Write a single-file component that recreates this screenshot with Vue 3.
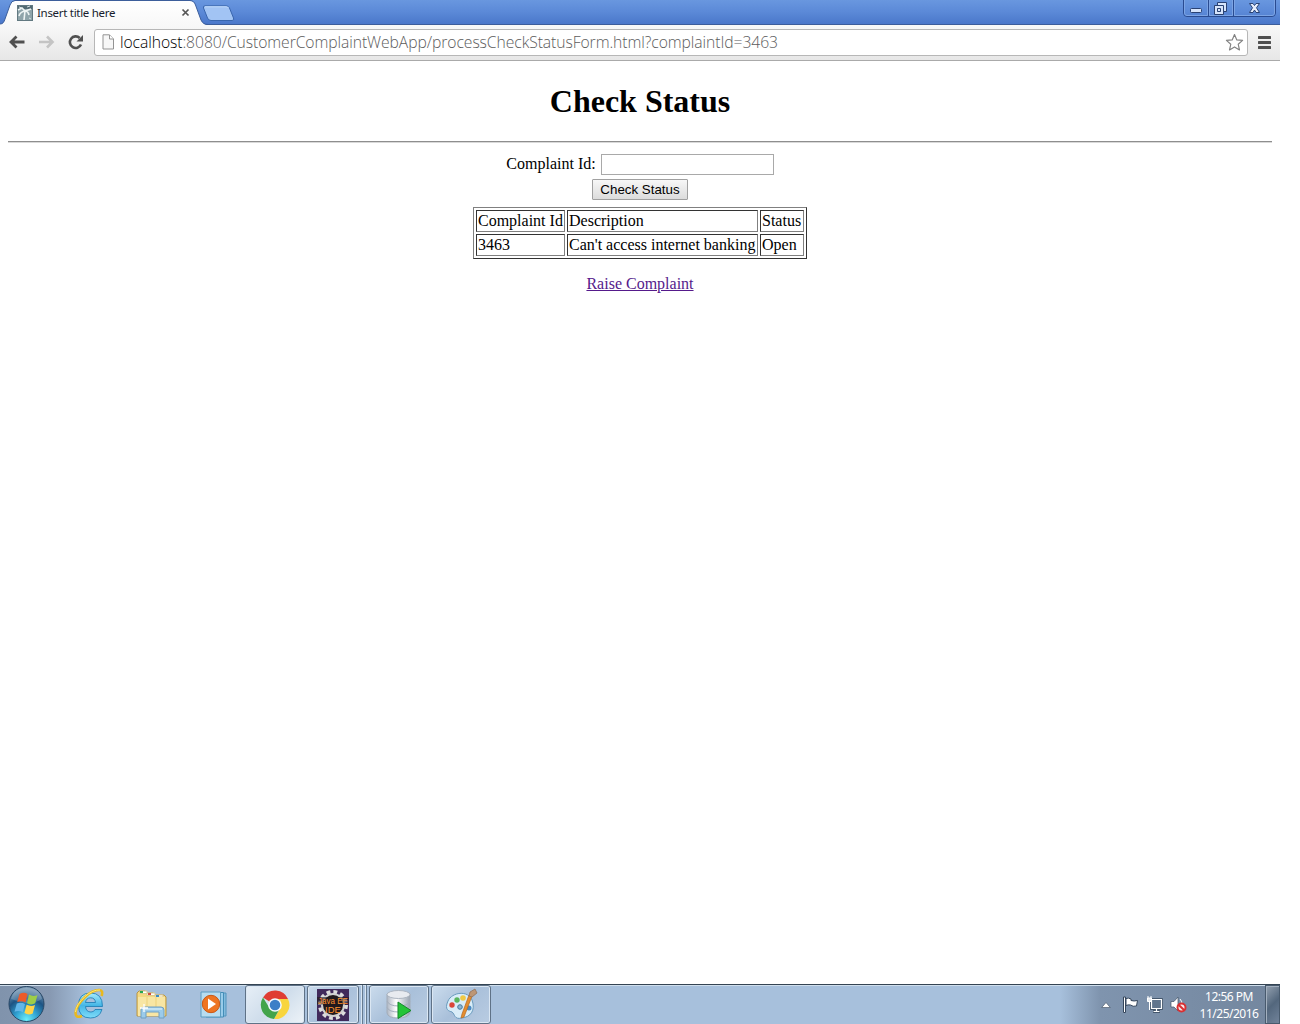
<script setup>
import { ref } from 'vue'

const complaintId = ref('')
const headers = ['Complaint Id', 'Description', 'Status']
const complaints = [['3463', "Can't access internet banking", 'Open']]
</script>

<template>
  <div class="screen">
    <header class="titlebar">
      <div class="tab">
        <svg class="tab-shape" width="212" height="25" viewBox="0 0 212 25">
          <defs>
            <linearGradient id="tabFill" x1="0" y1="0" x2="0" y2="1">
              <stop offset="0" stop-color="#fff" />
              <stop offset="1" stop-color="#f8f8f8" />
            </linearGradient>
          </defs>
          <path d="M0 25V24C3 24 4 22 5 19L10 5Q11.500 1 15 1H190Q194 1 195.500 5L201 20Q203 24.500 207 25Z" fill="url(#tabFill)" />
          <path d="M0 24C3 24 4 22 5 19L10 5Q11.500 .5 15 .5H190Q194 .5 195.500 5L201 20Q203 24.500 208 24.500H212" fill="none" stroke="#3c5e9b" />
        </svg>
        <div class="tab-content">
          <svg class="favicon" width="17" height="16" viewBox="0 0 17 16">
            <rect x=".5" y=".5" width="15" height="15" fill="#8fa4aa" stroke="#627981" />
            <path d="M1 1H15V4H1Z" fill="#526a73" />
            <path d="M1 5L5 3L8 6L14 4M2 11Q3 7 8 6Q11 6 12 10M8 6L7 15" fill="none" stroke="#eef4f4" stroke-width="1.600" />
            <path d="M2 2L5 3M10 2L13 1M12 13L14 14" stroke="#d6e2e4" />
          </svg>
          <span class="tab-title">Insert title here</span>
          <svg class="tab-close" width="9" height="9" viewBox="0 0 9 9"><path d="M1.500 1.500L7.500 7.500M7.500 1.500L1.500 7.500" stroke="#555" stroke-width="1.700" /></svg>
        </div>
      </div>
      <svg class="new-tab" width="34" height="17" viewBox="0 0 34 17">
        <path d="M3 .8H24Q26.500 .8 27.500 3L31.500 13Q32.500 15.500 30 15.500H9Q6.500 15.500 5.500 13L1.500 3Q.8 .8 3 .8Z" fill="#a2c4f4" stroke="#3865ad" />
        <path d="M3 1.800H24Q26 1.800 26.500 3" fill="none" stroke="#c4dcfb" />
      </svg>
      <svg class="window-buttons" width="94" height="18" viewBox="0 0 94 18">
        <path d="M.5 0V13Q.5 16.500 4 16.500H89Q92.500 16.500 92.500 13V0M25.500 0V16M50.500 0V16" fill="none" stroke="#294b91" />
        <path d="M1.500 0V13Q1.500 15.500 4 15.500H24.500V0M26.500 0V15.500H49.500V0M51.500 0V15.500H89Q91.500 15.500 91.500 13V0" fill="none" stroke="#7ca4e4" />
        <rect x="7.500" y="8.500" width="11" height="4" rx="1" fill="#d6e4fb" stroke="#2a4273" />
        <path d="M34.500 2.500H43.500V11.500H34.500Z" fill="#d6e4fb" stroke="#2a4273" />
        <path d="M31.500 5.500H40.500V14.500H31.500ZM34.500 8.500H37.500V11.500H34.500Z" fill="#d6e4fb" stroke="#2a4273" fill-rule="evenodd" />
        <path d="M66.500 3.500H70L71.500 5.500L73 3.500H76.500L73.500 7.800L76.500 12.500H73L71.500 10L70 12.500H66.500L69.500 7.800Z" fill="#e5edfd" stroke="#2a4273" />
      </svg>
    </header>

    <nav class="toolbar">
      <svg class="nav-icon back" width="18" height="16" viewBox="0 0 18 16"><path d="M17.500 8H4.500M9.500 2.500L4 8L9.500 13.500" fill="none" stroke="#505050" stroke-width="2.800" /></svg>
      <svg class="nav-icon forward" width="18" height="16" viewBox="0 0 18 16"><path d="M1 8H14M9 2.500L14.500 8L9 13.500" fill="none" stroke="#c4c4c4" stroke-width="2.600" /></svg>
      <svg class="nav-icon reload" width="18" height="16" viewBox="0 0 18 16"><path d="M13 10.500A5.800 5.800 0 1 1 11.700 4" fill="none" stroke="#505050" stroke-width="2.600" /><path d="M15 1V7.500H8.500Z" fill="#505050" /></svg>
      <div class="address">
        <svg class="page-icon" width="13" height="16" viewBox="0 0 13 16"><path d="M1 .8H7.500L11.500 5V15H1Z" fill="#f7f7f7" stroke="#939393" /><path d="M7.500 1V5H11.500" fill="#fff" stroke="#939393" /></svg>
        <span class="url"><b>localhost</b>:8080/CustomerComplaintWebApp/processCheckStatusForm.html?complaintId=3463</span>
        <svg class="star" width="19" height="19" viewBox="0 0 19 19"><path d="M9.500 1.500L11.800 6.900L17.600 7.400L13.200 11.200L14.500 17L9.500 13.900L4.500 17L5.800 11.200L1.400 7.400L7.200 6.900Z" fill="#fff" stroke="#828282" stroke-width="1.150" stroke-linejoin="round" /></svg>
      </div>
      <svg class="menu" width="13" height="13" viewBox="0 0 13 13"><path d="M1 1.500H12M1 6.500H12M1 11.500H12" stroke="#505050" stroke-width="2.900" stroke-linecap="round" /></svg>
    </nav>

    <main class="page">
      <h1>Check Status</h1>
      <hr />
      <form @submit.prevent>
        <label>Complaint Id: <input v-model="complaintId" type="text" /></label>
        <button type="submit">Check Status</button>
      </form>
      <table>
        <colgroup><col class="col-id" /><col class="col-description" /><col /></colgroup>
        <tbody>
          <tr><td v-for="h in headers" :key="h">{{ h }}</td></tr>
          <tr v-for="row in complaints" :key="row[0]"><td v-for="cell in row" :key="cell">{{ cell }}</td></tr>
        </tbody>
      </table>
      <a href="#">Raise Complaint</a>
    </main>

    <footer class="taskbar">
      <div class="start">
        <svg width="40" height="38" viewBox="0 0 40 38">
          <defs>
            <radialGradient id="orb" cx=".5" cy=".95" r=".95">
              <stop offset="0" stop-color="#6cf0fb" /><stop offset=".35" stop-color="#2f9fd0" /><stop offset=".65" stop-color="#1d5484" /><stop offset="1" stop-color="#87a3bb" />
            </radialGradient>
          </defs>
          <circle cx="19.500" cy="19" r="17.500" fill="url(#orb)" stroke="#294765" />
          <path d="M4 14Q7 3 19.500 3T35 14Q27 19 19.500 18T4 14Z" fill="#fff" opacity=".2" />
          <path d="M12.500 9Q17 6.500 20.500 9L18.500 17.500Q14.500 15.300 10.200 17Z" fill="#ed5b29" />
          <path d="M22 9.500Q26 12 30.500 10L28.200 18.300Q24.500 20.500 20 18.200Z" fill="#9dcd48" />
          <path d="M9.800 18.500Q14.200 16.700 18 19L15.800 27.200Q12 25 7.500 26.700Z" fill="#62b6e9" />
          <path d="M19.600 19.800Q24 22 28 20L25.700 28.500Q21.500 30.500 17.400 28Z" fill="#ffd448" />
        </svg>
      </div>
      <div class="pinned">
        <svg width="34" height="34" viewBox="0 0 34 34">
          <defs><linearGradient id="ie" x1="0" y1="0" x2="0" y2="1"><stop stop-color="#a8ecfd" /><stop offset=".5" stop-color="#45b6e6" /><stop offset="1" stop-color="#7edcf8" /></linearGradient></defs>
          <path d="M29.500 18.500H12.500Q13 24 18 24Q21 24 22 21.500H29Q26.500 30 17.500 30Q5.500 30 5.500 17.500Q5.500 5 17.500 5Q29.500 5 29.500 18.500ZM12.500 14.500H22.500Q22 9.800 17.600 9.800Q13.200 9.800 12.500 14.500Z" fill="url(#ie)" stroke="#1878b1" stroke-width=".8" fill-rule="evenodd" />
          <path d="M28.500 8Q30.500 2.500 26.500 2Q20 1.500 12 9Q3 17.500 2.500 25Q2.500 30.500 9 28" fill="none" stroke="#e9b91f" stroke-width="2.600" />
          <path d="M27 2Q20 1.500 12 8.500Q3 17 2.500 24" fill="none" stroke="#ffee84" stroke-width=".9" />
        </svg>
      </div>
      <div class="pinned">
        <svg width="34" height="32" viewBox="0 0 34 32">
          <path d="M2 27V4L4 2H10L12 4H18L20 6H29L31 8V27Z" fill="#f4d980" stroke="#b89544" />
          <path d="M5 2H12V4.500H5ZM12 4H20V6.500H12ZM20 6H28V8H20Z" fill="#fff" stroke="#dcc98f" />
          <path d="M5 2H8V4H5Z" fill="#21a850" /><path d="M13 4H16V6H13Z" fill="#d64c3c" /><path d="M21 6H24V8H21Z" fill="#3a8cc8" />
          <path d="M3 8H30V27H3Z" fill="#f8e6a4" /><path d="M12 8V18M21 8V18" stroke="#ecd17b" />
          <path d="M6 29V21Q6 18 9 18H26Q29 18 29 21V29H24V23H11V29Z" fill="#9bcbea" stroke="#6f9fc4" />
          <path d="M8 20H27" stroke="#e8f8ff" /><path d="M9 15V23M5 19H13" stroke="#fff" stroke-width="1.300" />
        </svg>
      </div>
      <div class="pinned">
        <svg width="32" height="28" viewBox="0 0 32 28">
          <path d="M12 2H28V25H12Z" fill="#83bbdd" stroke="#5294bd" /><path d="M8 1.500H25.500V26H8Z" fill="#99ccea" stroke="#448db7" /><path d="M3 1H22.500V26H3Z" fill="#b8ddf0" stroke="#5b9cc1" />
          <circle cx="13" cy="13" r="8.700" fill="#ee7522" stroke="#ca5815" /><path d="M10 7.500L18 13L10 18.500Z" fill="#fff" />
        </svg>
      </div>
      <div class="task active">
        <svg width="32" height="32" viewBox="0 0 32 32">
          <path d="M16 16L4 8.500A14 14 0 0 1 29 10H16Z" fill="#df3d32" />
          <path d="M16 10H29A14 14 0 0 1 15 30L22 18Z" fill="#f8d53d" />
          <path d="M4 8.500L10.500 19L16 21L20 21L15 30A14 14 0 0 1 4 8.500Z" fill="#43a44b" />
          <circle cx="16" cy="16" r="6.800" fill="#f5faff" /><circle cx="16" cy="16" r="5.300" fill="#3d7fc7" />
        </svg>
      </div>
      <div class="task eclipse">
        <svg width="32" height="32" viewBox="0 0 32 32">
          <rect width="32" height="32" fill="#412a5b" />
          <circle cx="16" cy="16" r="13" fill="none" stroke="#ddd" stroke-width="4" stroke-dasharray="3.800 3.007" />
          <circle cx="16" cy="16" r="11" fill="#21191d" stroke="#d1d1d1" stroke-width="2" />
          <path d="M0 8H32V15.500H0Z" fill="#21191d" opacity=".6" />
          <text class="ide-label" x="16" y="15" textLength="30" lengthAdjust="spacingAndGlyphs">Java EE</text>
          <text class="ide-label" x="16" y="23.500">IDE</text>
        </svg>
      </div>
      <div class="stack"><i></i><i></i></div>
      <div class="task database">
        <svg width="30" height="32" viewBox="0 0 30 32">
          <defs><linearGradient id="disk"><stop stop-color="#aeb6c3" /><stop offset=".4" stop-color="#fff" /><stop offset="1" stop-color="#9aa5b3" /></linearGradient></defs>
          <path d="M3 5V24Q4 29 14 29T26 24V5Z" fill="url(#disk)" stroke="#a4adb9" /><ellipse cx="14.500" cy="5.500" rx="11.500" ry="4" fill="#e8ebf0" stroke="#acb5c1" />
          <path d="M3 12Q5 17 14.500 17T26 12M3 18.500Q5 23 14.500 23T26 18.500" fill="none" stroke="#a5afbd" />
          <path d="M14 13V29.500L27 21.500Z" fill="#25c437" stroke="#15872a" />
        </svg>
      </div>
      <div class="task paint">
        <svg width="36" height="34" viewBox="0 0 36 34">
          <path d="M5 13C9 4 25 2 29 12C33 23 27 29 19 30C11 32 12 26 9 24C6 23 1 22 5 13Z" fill="#d9edf8" stroke="#689abd" />
          <circle cx="9" cy="17" r="2.700" fill="#d94739" /><circle cx="14" cy="12" r="2.700" fill="#59b55d" /><circle cx="20" cy="10" r="2.800" fill="#f0c944" /><circle cx="17" cy="19" r="2.300" fill="#8eb6d2" stroke="#447a9e" /><circle cx="26" cy="20" r="2.500" fill="#4b8ac3" />
          <path d="M29 8L21 29L18 30L19 26L26 7Z" fill="#e58e2e" stroke="#b26722" stroke-width=".7" /><path d="M26 8L27 4L32 1L34 5L29 9Z" fill="#bd9675" stroke="#8e6b51" stroke-width=".7" />
        </svg>
      </div>
      <div class="tray">
        <svg class="chevron" width="10" height="6" viewBox="0 0 10 6"><path d="M5 .5L9.300 5.500H.7Z" fill="#fff" stroke="#4d5b6d" stroke-width=".7" /></svg>
        <svg class="flag" width="17" height="18" viewBox="0 0 17 18"><path d="M1.500 1H3.500V16.500H1.500Z" fill="#fff" stroke="#36475c" /><path d="M4 2.500Q6.500 1.500 9 3V4.500Q12 5.500 15.500 4.500L14.500 10Q11 11 8.500 9Q6 8.500 4 9.500Z" fill="#fff" stroke="#36475c" /></svg>
        <svg class="network" width="17" height="17" viewBox="0 0 17 17"><path d="M5.500 3.500H15.500V12.500H5.500ZM7 15.500H14" fill="#5d7188" stroke="#35465a" stroke-width="2.600" /><path d="M5.500 3.500H15.500V12.500H5.500ZM7.500 15.500H13.500M10.500 13V15" fill="#60758d" stroke="#fff" stroke-width="1.200" /><path d="M1.500 2H5.500V5.500H1.500ZM3.500 6V14M2 2V0M5 2V0" fill="#e8edf2" stroke="#fff" /></svg>
        <svg class="speaker" width="17" height="17" viewBox="0 0 17 17"><path d="M1 5.500H4L8 1V15L4 11H1Z" fill="#fff" stroke="#425369" stroke-width=".7" /><path d="M10 3Q12 5 12 8" fill="none" stroke="#fff" /><circle cx="11.500" cy="11.500" r="4" fill="#f8e9e9" stroke="#d92f32" stroke-width="2" /><path d="M8.800 9L14 14" stroke="#d92f32" stroke-width="2" /></svg>
        <div class="clock"><span>12:56 PM</span><span class="date">11/25/2016</span></div>
        <div class="show-desktop"></div>
      </div>
    </footer>
  </div>
</template>

<style>
body { margin: 0; background: #fff; }
</style>

<style scoped>
.screen { width: 1280px; height: 1024px; display: flex; flex-direction: column; overflow: hidden; background: #fff; }
svg { display: block; flex: none; }
.titlebar { height: 25px; flex: none; display: flex; align-items: flex-start; background: linear-gradient(#6997df, #5c8ad8 45%, #4976c9); box-shadow: inset 0 -1px #3c5d9b; }
.tab { display: grid; width: 202px; height: 25px; }
.tab-shape, .tab-content { grid-area: 1 / 1; }
.tab-content { display: flex; align-items: center; height: 25px; padding-left: 17px; z-index: 1; }
.tab-title { width: 140px; margin-left: 3px; font: 11.5px/16px "Noto Sans", sans-serif; letter-spacing: -.3px; color: #171c2d; white-space: nowrap; }
.tab-close { margin-left: 4px; }
.new-tab { margin: 5px 0 0 0; }
.window-buttons { margin-left: auto; margin-right: 3px; }
.toolbar { height: 36px; box-sizing: border-box; flex: none; display: flex; align-items: center; padding: 0 9px 1px 7px; border-bottom: 1px solid #aaa; background: linear-gradient(#f8f8f8, #e7e7e7); }
.forward { margin-left: 13px; }
.reload { margin-left: 12px; }
.address { box-sizing: border-box; width: 1154px; height: 27px; margin-left: 8px; padding: 0 3px 0 7px; display: flex; align-items: center; background: #fff; border: 1px solid #b7b7b7; border-radius: 3px; }
.url { flex: 1; margin-left: 5px; font: 300 15.7px/23px "Open Sans", sans-serif; letter-spacing: -.07px; color: #5c5c5c; white-space: nowrap; }
.url b { font-weight: 300; color: #000; }
.menu { margin-left: auto; }
.page { height: 923px; box-sizing: border-box; padding: 0 8px; display: flex; flex-direction: column; align-items: center; font: 16px/18px "Liberation Serif", serif; color: #000; }
h1 { margin: 21px 0; font-size: 32px; line-height: 38px; }
hr { box-sizing: border-box; width: 100%; height: 2px; margin: 0 0 7px; border: 0; border-top: 1px solid #8e8e8e; border-bottom: 1px solid #d9d9d9; }
form { display: flex; flex-direction: column; align-items: center; }
label { height: 29px; padding-bottom: 1px; box-sizing: border-box; display: flex; align-items: center; white-space: pre; }
input { box-sizing: border-box; width: 173px; height: 21px; margin: 0 0 0 1px; padding: 1px; border: 1px solid #a9a9a9; border-radius: 0; }
button { width: 96px; height: 21px; padding: 0; border: 1px solid #a0a0a0; border-radius: 1px; background: linear-gradient(#f7f7f7, #dcdcdc); font: 13.33px/18px "Liberation Sans", sans-serif; color: #000; }
table { table-layout: fixed; width: 334px; height: 52px; margin-top: 7px; border: 1px solid; border-color: #808080 #333 #333 #808080; border-spacing: 2px; }
.col-id { width: 89px; }
.col-description { width: 191px; }
td { height: 20px; padding: 0 1px; border: 1px solid; border-color: #333 #808080 #808080 #333; line-height: 20px; white-space: nowrap; }
a { margin-top: 16px; color: #551a8b; text-decoration: underline; }
.taskbar { height: 40px; flex: none; box-sizing: border-box; border-top: 1px solid #344453; box-shadow: inset 0 1px #cfdeec; display: flex; background: linear-gradient(90deg, #8093ac 0, #8799b2 50px, #a7c0dc 88px, #a7c0dc 1060px, #7f94ae 1100px, #73869e 1280px); }
.start { box-sizing: border-box; width: 59px; padding-left: 7px; }
.pinned { width: 62px; display: flex; align-items: center; justify-content: center; }
.task { width: 60px; height: 39px; margin-right: 2px; box-sizing: border-box; border: 1px solid #5f7287; border-radius: 3px; display: flex; align-items: center; justify-content: center; background: linear-gradient(135deg, #cbdced, #a9c0da 50%, #b9cce2); box-shadow: inset 0 0 0 1px #dbe7f3; }
.active { background: linear-gradient(135deg, #e7eff7, #cfddeb 50%, #edf3f8); }
.eclipse { width: 52px; margin-right: 0; }
.eclipse svg { overflow: visible; }
.ide-label { font: 9.5px "Liberation Sans", sans-serif; fill: #ff9230; text-anchor: middle; }
.stack { width: 8px; height: 39px; margin-right: 2px; display: flex; }
.stack i { width: 4px; border-right: 1px solid #667b91; box-shadow: inset -1px 0 #d9e6f3; box-sizing: border-box; }
.tray { margin-left: auto; width: 180px; display: flex; align-items: center; }
.chevron { margin-left: 1px; }
.flag { margin-left: 11px; }
.network { margin-left: 7px; }
.speaker { margin-left: 7px; }
.clock { width: 68px; margin-left: 8px; display: flex; flex-direction: column; align-items: center; font: 12px/17px "Noto Sans", sans-serif; letter-spacing: -.5px; color: #fff; }
.show-desktop { width: 15px; height: 39px; box-sizing: border-box; margin-left: auto; border: 1px solid #485a6d; background: linear-gradient(135deg, #94a1b0, #53677d 50%, #71839a); box-shadow: inset 1px 1px #a3b0bf; }
</style>
